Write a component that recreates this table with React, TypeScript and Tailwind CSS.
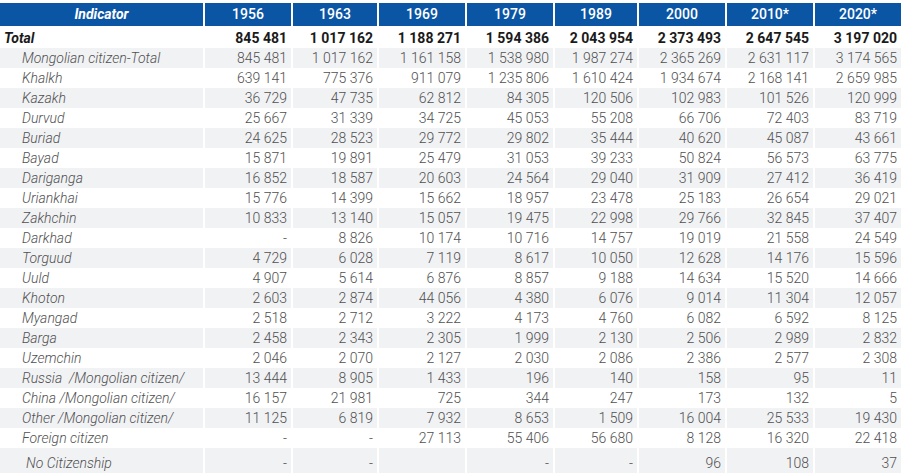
import React from "react";

const years = ["1956", "1963", "1969", "1979", "1989", "2000", "2010*", "2020*"];

type Row = { label: string; values: string[]; bold?: boolean; indent?: string; tall?: boolean };

const rows: Row[] = [
  { label: "Total", bold: true, values: ["845 481", "1 017 162", "1 188 271", "1 594 386", "2 043 954", "2 373 493", "2 647 545", "3 197 020"] },
  { label: "Mongolian citizen-Total", values: ["845 481", "1 017 162", "1 161 158", "1 538 980", "1 987 274", "2 365 269", "2 631 117", "3 174 565"] },
  { label: "Khalkh", values: ["639 141", "775 376", "911 079", "1 235 806", "1 610 424", "1 934 674", "2 168 141", "2 659 985"] },
  { label: "Kazakh", values: ["36 729", "47 735", "62 812", "84 305", "120 506", "102 983", "101 526", "120 999"] },
  { label: "Durvud", values: ["25 667", "31 339", "34 725", "45 053", "55 208", "66 706", "72 403", "83 719"] },
  { label: "Buriad", values: ["24 625", "28 523", "29 772", "29 802", "35 444", "40 620", "45 087", "43 661"] },
  { label: "Bayad", values: ["15 871", "19 891", "25 479", "31 053", "39 233", "50 824", "56 573", "63 775"] },
  { label: "Dariganga", values: ["16 852", "18 587", "20 603", "24 564", "29 040", "31 909", "27 412", "36 419"] },
  { label: "Uriankhai", values: ["15 776", "14 399", "15 662", "18 957", "23 478", "25 183", "26 654", "29 021"] },
  { label: "Zakhchin", values: ["10 833", "13 140", "15 057", "19 475", "22 998", "29 766", "32 845", "37 407"] },
  { label: "Darkhad", values: ["-", "8 826", "10 174", "10 716", "14 757", "19 019", "21 558", "24 549"] },
  { label: "Torguud", values: ["4 729", "6 028", "7 119", "8 617", "10 050", "12 628", "14 176", "15 596"] },
  { label: "Uuld", values: ["4 907", "5 614", "6 876", "8 857", "9 188", "14 634", "15 520", "14 666"] },
  { label: "Khoton", values: ["2 603", "2 874", "44 056", "4 380", "6 076", "9 014", "11 304", "12 057"] },
  { label: "Myangad", values: ["2 518", "2 712", "3 222", "4 173", "4 760", "6 082", "6 592", "8 125"] },
  { label: "Barga", values: ["2 458", "2 343", "2 305", "1 999", "2 130", "2 506", "2 989", "2 832"] },
  { label: "Uzemchin", values: ["2 046", "2 070", "2 127", "2 030", "2 086", "2 386", "2 577", "2 308"] },
  { label: "Russia  /Mongolian citizen/", values: ["13 444", "8 905", "1 433", "196", "140", "158", "95", "11"] },
  { label: "China /Mongolian citizen/", values: ["16 157", "21 981", "725", "344", "247", "173", "132", "5"] },
  { label: "Other /Mongolian citizen/", values: ["11 125", "6 819", "7 932", "8 653", "1 509", "16 004", "25 533", "19 430"] },
  { label: "Foreign citizen", values: ["-", "-", "27 113", "55 406", "56 680", "8 128", "16 320", "22 418"] },
  { label: "No Citizenship", indent: "pl-[26px]", tall: true, values: ["-", "-", "", "-", "-", "96", "108", "37"] },
];

export default function App() {
  return (
    <div className="w-[919px] h-[473px] bg-white overflow-hidden pt-[3px]" style={{ fontFamily: "Roboto, 'Liberation Sans', sans-serif" }}>
      <div className="grid grid-cols-[203px_86px_84px_86px_86px_82px_86px_86px_86px] gap-x-[2px] w-[902px]">
        <div className="bg-[#0b56a4] h-[23px] mb-[2px] flex items-center justify-center text-white text-[14px] font-bold italic">Indicator</div>
        {years.map((y) => (
          <div key={y} className="bg-[#0b56a4] h-[23px] mb-[2px] flex items-center justify-center text-white text-[14px] font-medium">
            {y}
          </div>
        ))}
        {rows.map((r, i) => {
          const bg = i % 2 === 1 ? "bg-[#f1f2f4]" : "bg-white";
          const h = r.tall ? "h-[25px] pt-[5px]" : "h-[20px]";
          const txt = r.bold ? "font-bold text-[#1a1a1a]" : "font-light text-[#505050]";
          return (
            <React.Fragment key={r.label}>
              <div className={`${bg} ${h} flex items-center italic text-[14px] whitespace-pre ${txt} ${r.bold ? "pl-[4px]" : r.indent ?? "pl-[22px]"}`}>
                {r.label}
              </div>
              {r.values.map((v, j) => (
                <div key={j} className={`${bg} ${h} flex items-center justify-end pr-[4px] text-[14px] whitespace-pre ${txt}`}>
                  {v}
                </div>
              ))}
            </React.Fragment>
          );
        })}
      </div>
    </div>
  );
}
